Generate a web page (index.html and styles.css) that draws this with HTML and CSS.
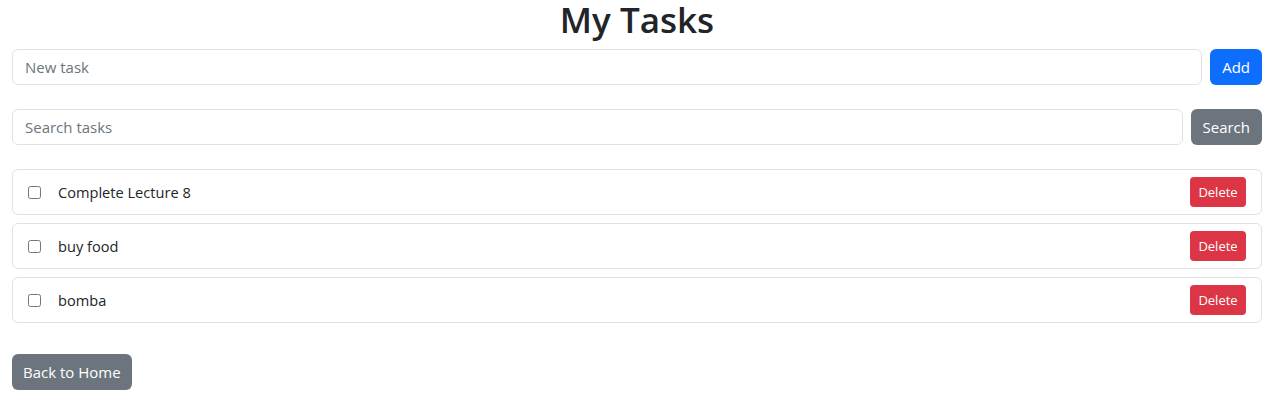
FILE: index.html
```html
<!DOCTYPE html>
<html lang="en">
<head>
<meta charset="utf-8">
<title>My Tasks</title>
<link rel="stylesheet" href="styles.css">
</head>
<body>
<div class="page">
  <h1 class="title">My Tasks</h1>
  <form class="input-row">
    <input class="field" type="text" placeholder="New task">
    <button type="button" class="btn btn-primary">Add</button>
  </form>
  <form class="input-row search-row">
    <input class="field" type="text" placeholder="Search tasks">
    <button type="button" class="btn btn-secondary">Search</button>
  </form>
  <ul class="task-list">
    <li class="task">
      <input class="check" type="checkbox">
      <span class="task-text">Complete Lecture 8</span>
      <button type="button" class="btn-sm btn-danger">Delete</button>
    </li>
    <li class="task">
      <input class="check" type="checkbox">
      <span class="task-text">buy food</span>
      <button type="button" class="btn-sm btn-danger">Delete</button>
    </li>
    <li class="task">
      <input class="check" type="checkbox">
      <span class="task-text">bomba</span>
      <button type="button" class="btn-sm btn-danger">Delete</button>
    </li>
  </ul>
  <div class="footer">
    <button type="button" class="btn btn-secondary btn-home">Back to Home</button>
  </div>
</div>
</body>
</html>
```
FILE: styles.css
```css
* { box-sizing: border-box; }
html, body { margin: 0; padding: 0; background: #fff; }
body {
  font-family: "Open Sans", "Noto Sans", "Liberation Sans", sans-serif;
  color: #212529;
  font-size: 15px;
}
.page {
  padding: 0 18px 0 12px;
  display: flex;
  flex-direction: column;
}
.title {
  margin: 0 0 9px;
  line-height: 40px;
  font-size: 35px;
  font-weight: 600;
  text-align: center;
  color: #212529;
}
.input-row {
  display: flex;
  gap: 8px;
  margin: 0;
}
.search-row { margin-top: 24px; }
.field {
  flex: 1;
  height: 36px;
  border: 1px solid #dee2e6;
  border-radius: 6px;
  padding: 0 12px;
  font-family: inherit;
  font-size: 15px;
  color: #212529;
  outline: none;
}
.field::placeholder { color: #6c757d; }
.btn {
  height: 36px;
  border: none;
  border-radius: 6px;
  padding: 0 12px;
  font-family: inherit;
  font-size: 15px;
  color: #fff;
  cursor: pointer;
}
.btn-primary { background: #0d6efd; }
.btn-secondary { background: #6c757d; }
.btn-home { padding: 0 11px; }
.task-list {
  list-style: none;
  margin: 24px 0 0;
  padding: 0;
  display: flex;
  flex-direction: column;
  gap: 8px;
}
.task {
  height: 46px;
  border: 1px solid #dee2e6;
  border-radius: 6px;
  display: flex;
  align-items: center;
  padding: 0 15px;
}
.check {
  width: 13px;
  height: 13px;
  margin: 0 17px 0 0;
}
.task-text { flex: 1; font-size: 14.6px; }
.btn-sm {
  height: 30px;
  width: 56px;
  border: none;
  border-radius: 4px;
  padding: 0;
  font-family: inherit;
  font-size: 13px;
  color: #fff;
}
.btn-danger { background: #dc3545; }
.footer { margin-top: 31px; }
```
